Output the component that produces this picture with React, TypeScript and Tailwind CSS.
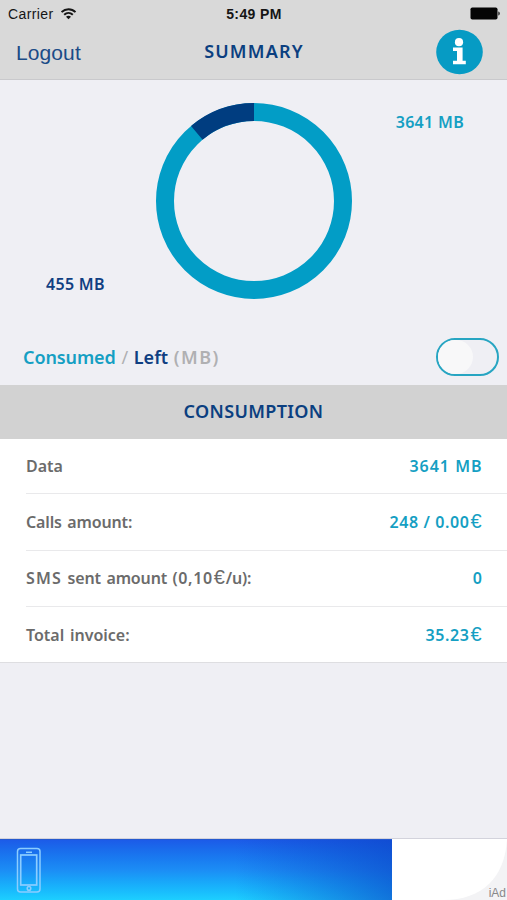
import React from "react";

const CONSUMED = 3641;
const LEFT = 455;

function StatusBar() {
  return (
    <div className="grid h-[27px] grid-cols-3 items-center pl-2 pr-[7px] font-['Liberation_Sans',Arial,sans-serif] text-[14px] text-[#151515]">
      <div className="flex items-center gap-[7px]">
        <span className="pt-px tracking-[0.4px]">Carrier</span>
        <svg width="16" height="12" viewBox="0 0 16 12" fill="none" stroke="#151515" strokeWidth="2">
          <path d="M.5 4.1C4.5 .2 10.5 .2 14.5 4.1" />
          <path d="M3.2 6.8c2.5-2.3 6.1-2.3 8.6 0" />
          <path d="M7.5 11.3 5 8.7c1.4-1.3 3.6-1.3 5 0z" fill="#151515" stroke="none" />
        </svg>
      </div>
      <span className="pt-[2px] text-center text-[14px] font-bold tracking-[0.4px]">5:49 PM</span>
      <svg className="justify-self-end" width="31" height="13" viewBox="0 0 31 13">
        <rect x="1.5" y="0.5" width="27" height="12" rx="1.8" fill="#050505" />
        <path d="M29.3 4.5c2 .7 2 3.3 0 4z" fill="#222" />
      </svg>
    </div>
  );
}

function NavBar() {
  return (
    <div className="grid h-[52px] grid-cols-3 items-center pl-4 pr-6">
      <button className="pb-px text-left font-['Liberation_Sans',Arial,sans-serif] text-[21px] tracking-[0.1px] text-[#1b4b87]">
        Logout
      </button>
      <h1 className="pb-[3px] pl-[9px] text-center text-[18px] font-semibold tracking-[1.2px] text-[#0b3f80]">SUMMARY</h1>
      <svg className="-mt-[3px] justify-self-end" width="48" height="46" viewBox="0 0 48 46">
        <ellipse cx="24.5" cy="23" rx="23.3" ry="22.3" fill="#069bc4" />
        <circle cx="24" cy="13.2" r="4.1" fill="#fff" />
        <path d="M18 18.6h9.6v13.2h3.2v3.5H18v-3.5h4V22h-4z" fill="#fff" />
      </svg>
    </div>
  );
}

function UsageChart() {
  const left = (LEFT / (LEFT + CONSUMED)) * 100;
  return (
    <div className="flex h-[250px] justify-between px-[43px] pt-[22px] text-[16px] font-semibold leading-6 tracking-[0.3px]">
      <span className="w-[110px] self-end pb-[34px] pl-[3px] text-[#103f82]">455 MB</span>
      <svg className="shrink-0" width="198" height="198" viewBox="0 0 198 198">
        <g fill="none" strokeWidth="18" transform="rotate(-90 99 99)">
          <circle cx="99" cy="99" r="89" stroke="#029dc6" />
          <circle cx="99" cy="99" r="89" stroke="#003d80" pathLength="100" strokeDasharray={`${left} 100`} strokeDashoffset={left - 100} />
        </g>
      </svg>
      <span className="w-[110px] pt-[8px] text-right text-[#159fc3]">3641 MB</span>
    </div>
  );
}

function Legend() {
  return (
    <div className="flex h-[55px] items-center justify-between pl-[23px] pr-2">
      <p className="pb-px text-[18px] font-semibold text-[#b0b0b2]">
        <span className="tracking-[-0.1px] text-[#159fc3]">Consumed</span> <span className="px-px font-normal">/</span>{" "}
        <span className="text-[#103f82]">Left</span> <span className="pl-px tracking-[1.4px]">(MB)</span>
      </p>
      <button
        aria-label="Toggle units"
        className="mb-px h-[38px] w-[63px] overflow-hidden rounded-full border-2 border-[#27a5c2]"
      >
        <span className="block h-full w-[35px] rounded-r-full bg-[#f8f8f9]" />
      </button>
    </div>
  );
}

function Row({ label, value, last }: { label: React.ReactNode; value: React.ReactNode; last?: boolean }) {
  return (
    <div
      className={
        last
          ? "flex h-[56px] items-center justify-between pr-[25px]"
          : "flex h-[56.25px] items-center justify-between border-b border-[#e9e9eb] pr-[25px] first:h-[55.25px]"
      }
    >
      <span className="text-[#6b6b6b] [word-spacing:1.5px]">{label}</span>
      <span className="-mr-[0.6px] tracking-[0.6px] text-[#159fc3]">{value}</span>
    </div>
  );
}

function Euro() {
  return (
    <span className="inline-block w-[13px] text-center font-['Liberation_Sans',Arial,sans-serif] text-[20px] font-normal leading-none tracking-normal">
      €
    </span>
  );
}

function AdBanner() {
  return (
    <div className="flex h-[62px] border-t border-[#d3d3dc] bg-white">
      <div className="relative w-[392px] overflow-hidden border-t border-[#2459cf] bg-linear-to-b from-[#1c5be8] via-[#1c8df5] to-[#1dcfff]">
        <div className="absolute inset-0 bg-linear-to-r from-transparent from-60% to-[#0b45c8]/65" />
        <svg className="absolute left-[16px] top-[7px]" width="26" height="47" viewBox="0 0 26 47" fill="none" stroke="#8ccdff" strokeWidth="1.5">
          <rect x="1.5" y="1.5" width="22.5" height="43.5" rx="3" />
          <rect x="4.7" y="8" width="16" height="30" strokeWidth="1.7" />
          <path d="M10 5.3h6" />
          <circle cx="13" cy="41.4" r="1.8" />
        </svg>
      </div>
      <div className="relative flex-1 overflow-hidden bg-[#f3f3f5]">
        <svg className="absolute inset-0" width="115" height="61" viewBox="0 0 115 61">
          <path d="M0 0h115C113 38 91 61 51 61H0z" fill="#fff" />
        </svg>
        <span className="absolute bottom-[-1px] right-[1px] font-['Liberation_Sans',Arial,sans-serif] text-[12px] leading-[16px] text-[#88888a]">
          iAd
        </span>
      </div>
    </div>
  );
}

export default function App() {
  return (
    <main className="flex h-[900px] w-[507px] flex-col overflow-hidden bg-[#efeff4] font-['Noto_Sans','Open_Sans',sans-serif]">
      <header className="h-[80px] shrink-0 border-b border-[#c9c9cc] bg-[#d9d9d9]">
        <StatusBar />
        <NavBar />
      </header>
      <UsageChart />
      <Legend />
      <h2 className="flex h-[54px] items-center justify-center bg-[#d2d2d2] pb-px text-[18px] font-semibold tracking-[0.35px] text-[#0b3f80]">
        CONSUMPTION
      </h2>
      <section className="h-[224px] border-b border-[#dedee1] bg-white pl-[26px] text-[16px] font-semibold">
        <Row label="Data" value={<span className="tracking-[1px]">3641 MB</span>} />
        <Row label={<span className="tracking-[-0.15px]">Calls amount:</span>} value={<>248 / 0.00<Euro /></>} />
        <Row
          label={
            <span className="tracking-[-0.15px]">
              <span className="tracking-[1.2px]">SMS</span> sent amount <span className="tracking-[0.6px]">(0,10</span>
              <Euro />/u):
            </span>
          }
          value="0"
        />
        <Row label="Total invoice:" value={<>35.23<Euro /></>} last />
      </section>
      <div className="flex-1" />
      <AdBanner />
    </main>
  );
}
